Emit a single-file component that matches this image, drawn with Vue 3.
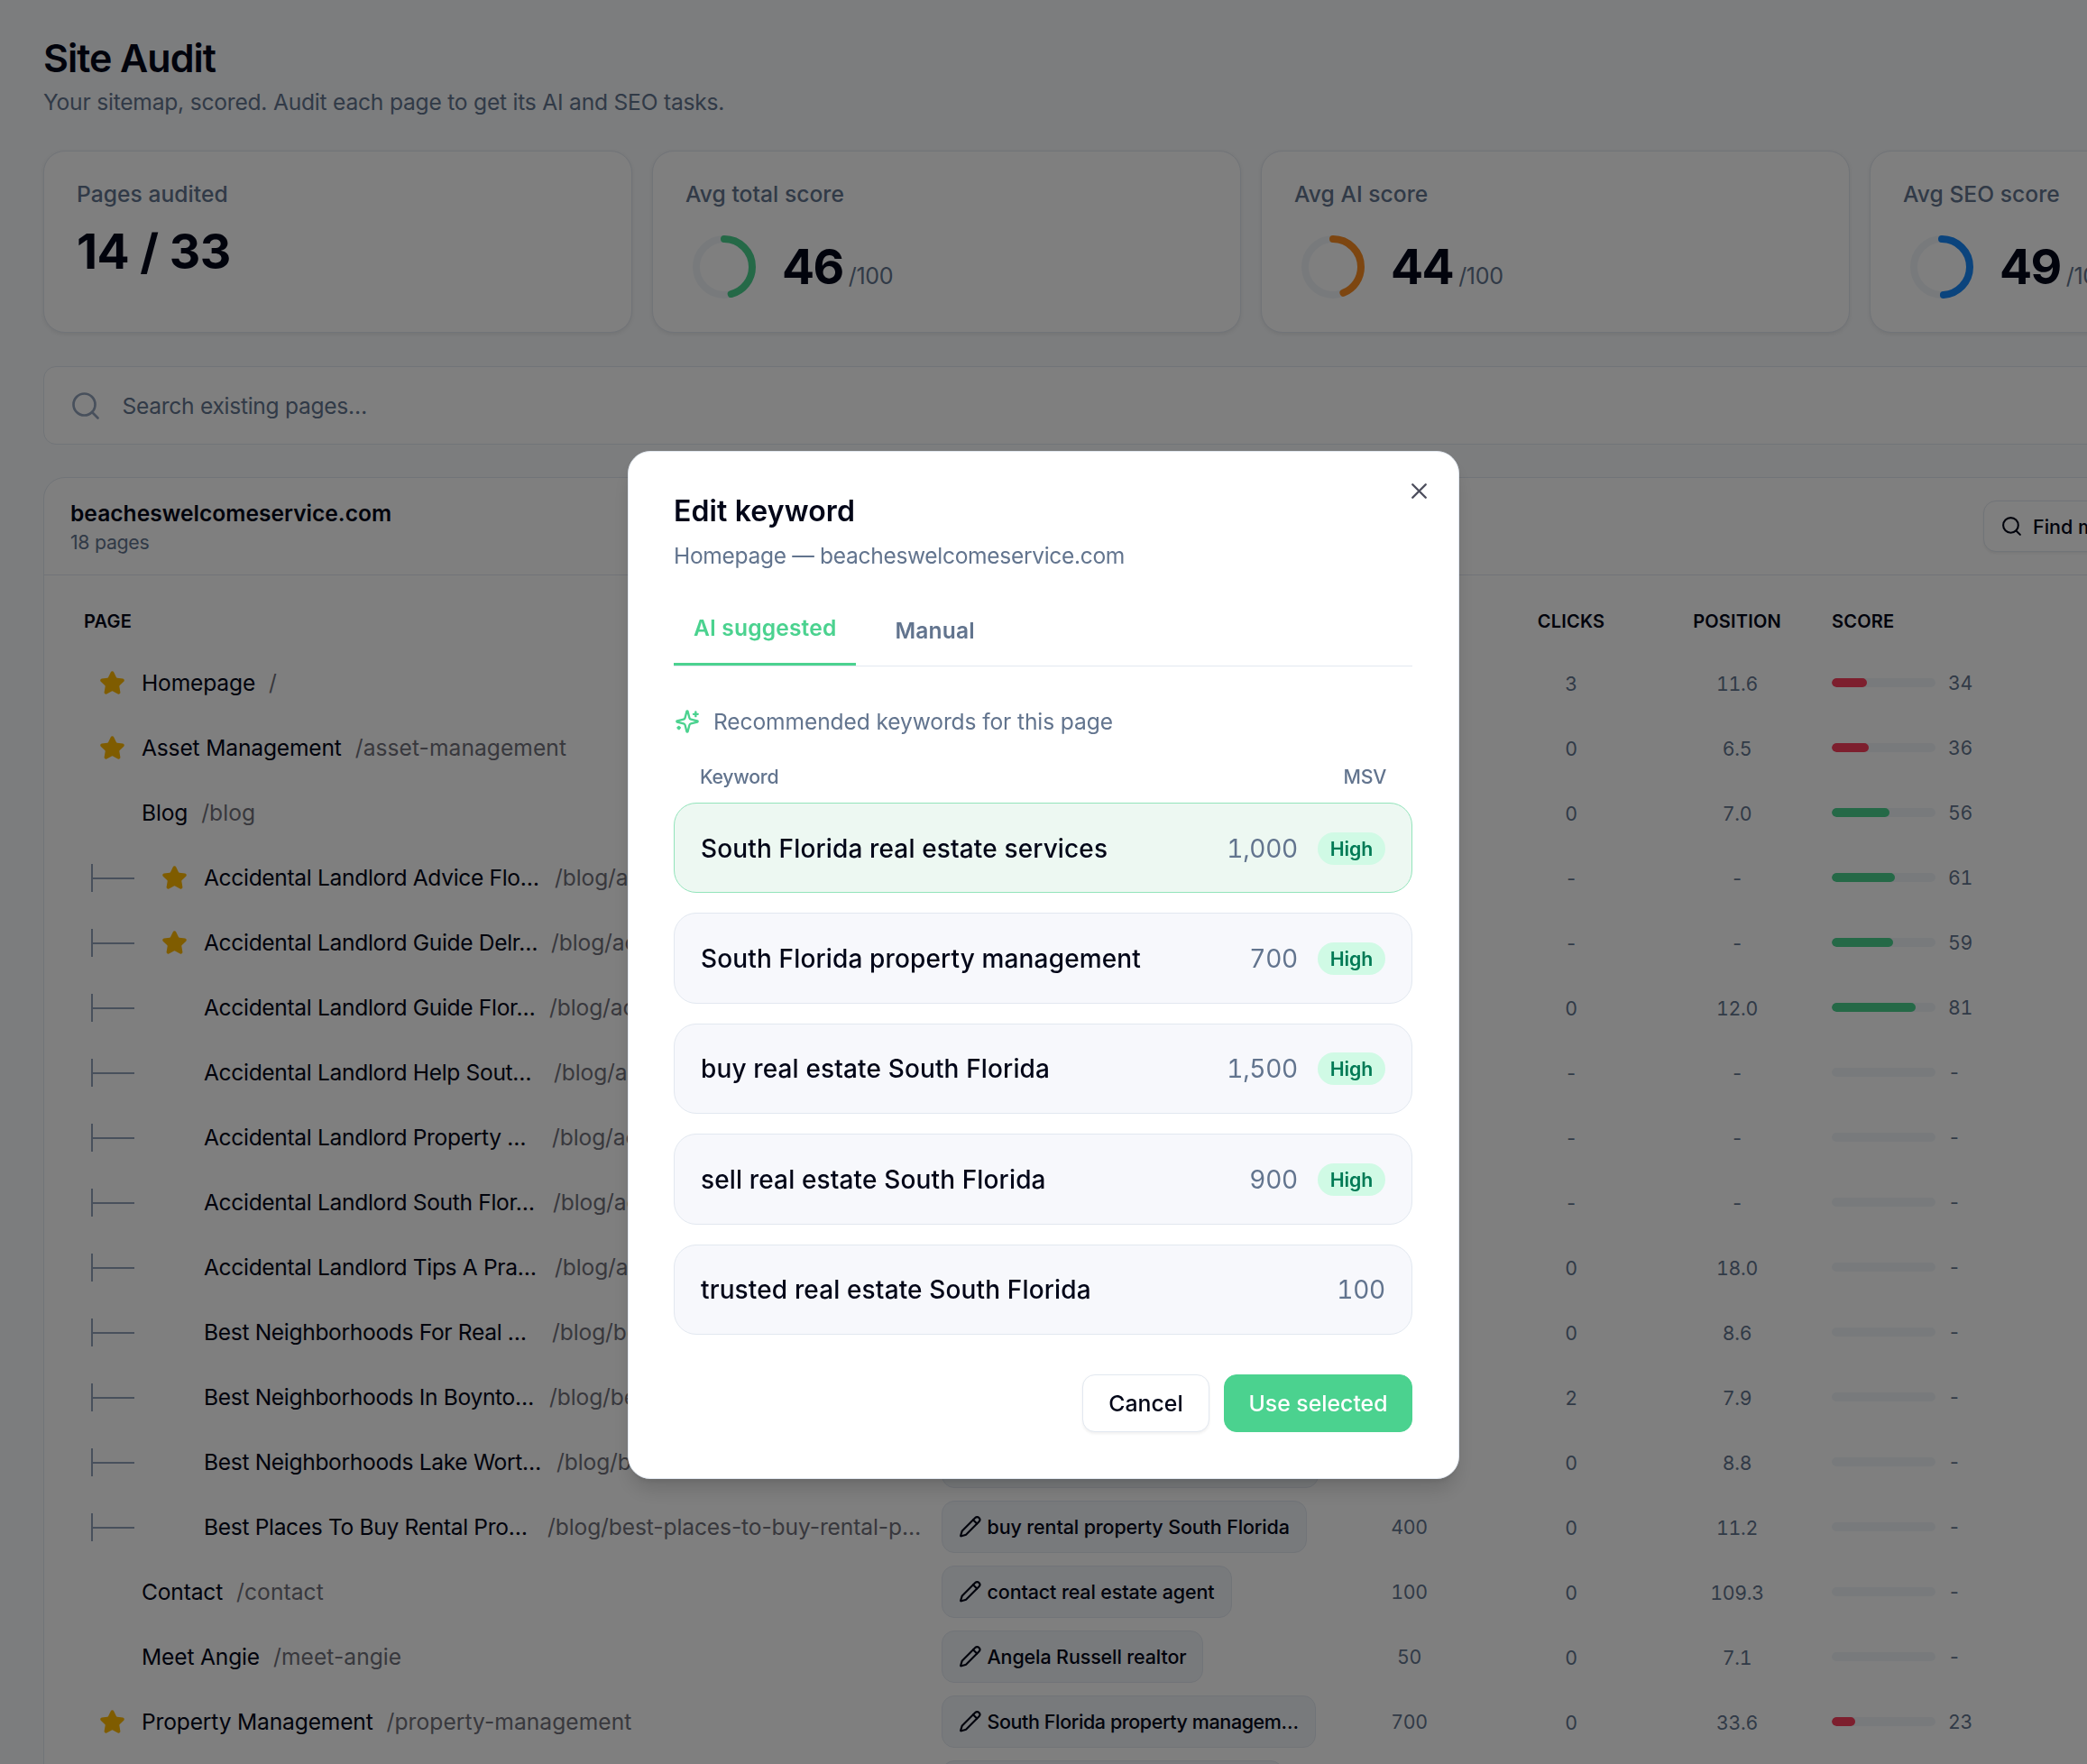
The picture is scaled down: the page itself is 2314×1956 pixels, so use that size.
<template>
  <div class="page">
    <header class="page-header">
      <h1>Site Audit</h1>
      <p>Your sitemap, scored. Audit each page to get its AI and SEO tasks.</p>
    </header>

    <section class="stats">
      <div class="stat-card">
        <div class="stat-label">Pages audited</div>
        <div class="stat-value pages-value">14 / 33</div>
      </div>
      <div v-for="stat in stats" :key="stat.label" class="stat-card">
        <div class="stat-label">{{ stat.label }}</div>
        <div class="stat-score">
          <svg class="ring" viewBox="0 0 86 86">
            <circle class="ring-track" cx="43" cy="43" r="31" />
            <circle
              class="ring-value"
              cx="43"
              cy="43"
              r="31"
              pathLength="100"
              :stroke="stat.color"
              :stroke-dasharray="`${stat.score} 100`"
              transform="rotate(-90 43 43)"
            />
          </svg>
          <div class="stat-figure">
            <span class="stat-value">{{ stat.score }}</span>
            <span class="stat-max">/100</span>
          </div>
        </div>
      </div>
    </section>

    <div class="search">
      <svg class="search-icon" viewBox="0 0 24 24">
        <circle cx="11" cy="11" r="8" />
        <path d="m21 21-4.3-4.3" />
      </svg>
      <span>Search existing pages…</span>
    </div>

    <section class="site">
      <div class="site-header">
        <div class="site-name">
          <h2>beacheswelcomeservice.com</h2>
          <p>18 pages</p>
        </div>
        <button class="find-btn">
          <svg viewBox="0 0 24 24">
            <circle cx="11" cy="11" r="8" />
            <path d="m21 21-4.3-4.3" />
          </svg>
          Find more pages
        </button>
      </div>

      <div class="row head">
        <div class="head-page">Page</div>
        <div></div>
        <div class="num"></div>
        <div class="num">Clicks</div>
        <div class="num">Position</div>
        <div class="score">Score</div>
      </div>

      <div v-for="row in rows" :key="row.path" class="row">
        <div class="page-cell" :class="{ child: row.w }">
          <span v-if="row.w" class="branch"></span>
          <span class="star-slot">
            <svg v-if="row.star" viewBox="0 0 24 24">
              <path d="M11.525 2.295a.53.53 0 0 1 .95 0l2.31 4.679a2.123 2.123 0 0 0 1.595 1.16l5.166.756a.53.53 0 0 1 .294.904l-3.736 3.638a2.123 2.123 0 0 0-.611 1.878l.882 5.14a.53.53 0 0 1-.771.56l-4.618-2.428a2.122 2.122 0 0 0-1.973 0L6.396 21.01a.53.53 0 0 1-.77-.56l.881-5.139a2.122 2.122 0 0 0-.611-1.879L2.16 9.795a.53.53 0 0 1 .294-.906l5.165-.755a2.122 2.122 0 0 0 1.597-1.16z" />
            </svg>
          </span>
          <span class="name" :style="row.w ? { width: row.w + 'px' } : null">{{ row.name }}</span>
          <span class="path">{{ row.path }}</span>
        </div>
        <div class="keyword-cell">
          <span v-if="row.keyword" class="pill" :class="{ truncated: row.keyword.endsWith('…') }">
            <svg viewBox="0 0 24 24">
              <path d="M21.174 6.812a1 1 0 0 0-3.986-3.987L3.842 16.174a2 2 0 0 0-.5.83l-1.321 4.352a.5.5 0 0 0 .623.622l4.353-1.32a2 2 0 0 0 .83-.497z" />
              <path d="m15 5 4 4" />
            </svg>
            {{ row.keyword }}
          </span>
        </div>
        <div class="num msv">{{ row.msv }}</div>
        <div class="num">{{ row.clicks }}</div>
        <div class="num">{{ row.position }}</div>
        <div class="score">
          <span class="bar">
            <span
              v-if="row.score"
              class="bar-fill"
              :class="row.score < 50 ? 'low' : 'good'"
              :style="{ width: row.score + '%' }"
            ></span>
          </span>
          <span>{{ row.score || '-' }}</span>
        </div>
      </div>
    </section>
  </div>

  <div class="overlay">
    <div class="modal">
      <svg class="close" viewBox="0 0 24 24">
        <path d="M18 6 6 18" />
        <path d="m6 6 12 12" />
      </svg>
      <h3>Edit keyword</h3>
      <p class="modal-sub">Homepage — beacheswelcomeservice.com</p>

      <div class="tabs">
        <div class="tab active">AI suggested</div>
        <div class="tab">Manual</div>
      </div>

      <div class="recommend">
        <svg viewBox="0 0 24 24">
          <path d="M9.937 15.5A2 2 0 0 0 8.5 14.063l-6.135-1.582a.5.5 0 0 1 0-.962L8.5 9.936A2 2 0 0 0 9.937 8.5l1.582-6.135a.5.5 0 0 1 .963 0L14.063 8.5A2 2 0 0 0 15.5 9.937l6.135 1.581a.5.5 0 0 1 0 .964L15.5 14.063a2 2 0 0 0-1.437 1.437l-1.582 6.135a.5.5 0 0 1-.963 0z" />
          <path d="M20 3v4" />
          <path d="M22 5h-4" />
          <path d="M4 17v2" />
          <path d="M5 18H3" />
        </svg>
        Recommended keywords for this page
      </div>

      <div class="list-head">
        <span>Keyword</span>
        <span>MSV</span>
      </div>
      <div class="options">
        <div
          v-for="(option, index) in options"
          :key="option.keyword"
          class="option"
          :class="{ selected: index === selected }"
          @click="selected = index"
        >
          <span class="option-name">{{ option.keyword }}</span>
          <span class="option-msv">{{ option.msv }}</span>
          <span v-if="option.high" class="badge">High</span>
        </div>
      </div>

      <div class="actions">
        <button class="btn cancel">Cancel</button>
        <button class="btn primary">Use selected</button>
      </div>
    </div>
  </div>
</template>

<script setup>
import { ref } from 'vue'

const selected = ref(0)

const stats = [
  { label: 'Avg total score', score: 46, color: '#4bd28f' },
  { label: 'Avg AI score', score: 44, color: '#fb8c22' },
  { label: 'Avg SEO score', score: 49, color: '#1688fb' }
]

// w is the width of the name column of nested pages
const rows = [
  { name: 'Homepage', path: '/', star: true, clicks: 3, position: '11.6', score: 34 },
  { name: 'Asset Management', path: '/asset-management', star: true, clicks: 0, position: '6.5', score: 36 },
  { name: 'Blog', path: '/blog', clicks: 0, position: '7.0', score: 56 },
  { name: 'Accidental Landlord Advice Flo…', path: '/blog/accidental-landlord-advice', w: 390, star: true, clicks: '-', position: '-', score: 61 },
  { name: 'Accidental Landlord Guide Delr…', path: '/blog/accidental-landlord-guide-d', w: 386, star: true, clicks: '-', position: '-', score: 59 },
  { name: 'Accidental Landlord Guide Flor…', path: '/blog/accidental-landlord-guide-f', w: 384, clicks: 0, position: '12.0', score: 81 },
  { name: 'Accidental Landlord Help Sout…', path: '/blog/accidental-landlord-help', w: 389, clicks: '-', position: '-' },
  { name: 'Accidental Landlord Property …', path: '/blog/accidental-landlord-prop', w: 387, clicks: '-', position: '-' },
  { name: 'Accidental Landlord South Flor…', path: '/blog/accidental-landlord-south', w: 388, clicks: '-', position: '-' },
  { name: 'Accidental Landlord Tips A Pra…', path: '/blog/accidental-landlord-tips', w: 390, clicks: 0, position: '18.0' },
  { name: 'Best Neighborhoods For Real …', path: '/blog/best-neighborhoods-for', w: 387, clicks: 0, position: '8.6' },
  { name: 'Best Neighborhoods In Boynto…', path: '/blog/best-neighborhoods-in', w: 384, clicks: 2, position: '7.9' },
  { name: 'Best Neighborhoods Lake Wort…', path: '/blog/best-neighborhoods-lake', w: 392, keyword: 'best neighborhoods in Lake Worth', clicks: 0, position: '8.8' },
  { name: 'Best Places To Buy Rental Pro…', path: '/blog/best-places-to-buy-rental-p…', w: 382, keyword: 'buy rental property South Florida', msv: 400, clicks: 0, position: '11.2' },
  { name: 'Contact', path: '/contact', keyword: 'contact real estate agent', msv: 100, clicks: 0, position: '109.3' },
  { name: 'Meet Angie', path: '/meet-angie', keyword: 'Angela Russell realtor', msv: 50, clicks: 0, position: '7.1' },
  { name: 'Property Management', path: '/property-management', star: true, keyword: 'South Florida property managem…', msv: 700, clicks: 0, position: '33.6', score: 23 },
  { name: '', path: '', keyword: 'real estate agent South Florida' }
]

const options = [
  { keyword: 'South Florida real estate services', msv: '1,000', high: true },
  { keyword: 'South Florida property management', msv: '700', high: true },
  { keyword: 'buy real estate South Florida', msv: '1,500', high: true },
  { keyword: 'sell real estate South Florida', msv: '900', high: true },
  { keyword: 'trusted real estate South Florida', msv: '100' }
]
</script>

<style>
body {
  overflow: hidden;
}
</style>

<style scoped>
h1,
h2,
h3,
p {
  margin: 0;
}

button {
  font-family: inherit;
}

svg {
  display: block;
  flex: none;
  fill: none;
  stroke: currentColor;
  stroke-width: 2;
  stroke-linecap: round;
  stroke-linejoin: round;
}

.page,
.overlay {
  box-sizing: border-box;
  height: 1956px;
  font-family: Inter, sans-serif;
  font-size: 24.6px;
  letter-spacing: -0.012em;
  color: #020618;
}

.page {
  overflow: hidden;
  padding: 38.5px 0 0 48px;
  background: #f8fafc;
}

.page-header h1 {
  font-size: 43px;
  font-weight: 600;
  line-height: 50px;
  letter-spacing: -0.024em;
}

.page-header p {
  margin-top: 6px;
  line-height: 36px;
  letter-spacing: -0.009em;
  color: #62748e;
}

.stats {
  display: grid;
  grid-template-columns: repeat(4, 653px);
  gap: 22px;
  margin-top: 36.5px;
}

.stat-card {
  box-sizing: border-box;
  height: 202px;
  padding: 29px 36px;
  border: 1px solid #e2e8f0;
  border-radius: 24px;
  background: #fff;
  box-shadow: 0 1.5px 4px rgba(0, 0, 0, 0.07);
}

.stat-label {
  line-height: 36px;
  font-weight: 500;
  letter-spacing: 0.002em;
  color: #62748e;
}

.stat-value {
  font-size: 53.5px;
  font-weight: 700;
  line-height: 64px;
  letter-spacing: -0.03em;
}

.pages-value {
  margin-top: 14px;
  letter-spacing: -0.01em;
}

.stat-score {
  display: flex;
  align-items: center;
  gap: 21px;
  margin-top: 20px;
}

.ring {
  width: 86px;
  height: 86px;
  stroke-width: 8;
}

.ring-track {
  stroke: #f1f5f9;
}

.stat-figure {
  display: flex;
  align-items: baseline;
  gap: 6px;
}

.stat-max {
  font-size: 25px;
  color: #62748e;
}

.search {
  box-sizing: border-box;
  display: flex;
  align-items: center;
  gap: 22.5px;
  width: 2678px;
  height: 87px;
  margin-top: 37px;
  padding-left: 28px;
  border: 1px solid #e2e8f0;
  border-radius: 14px;
  background: #fff;
  color: #62748e;
}

.search-icon {
  width: 36px;
  height: 36px;
  stroke-width: 1.8;
  color: #90a1b9;
}

.site {
  width: 2676px;
  margin-top: 36px;
  border: 1px solid #e2e8f0;
  border-radius: 24px;
  background: #fff;
}

.site-header {
  display: flex;
  align-items: center;
  height: 107px;
  padding-left: 29px;
  border-bottom: 1px solid #e2e8f0;
}

.site-name {
  flex: 0 0 2121px;
}

.site-name h2 {
  font-size: 24.6px;
  font-weight: 600;
  line-height: 34px;
  letter-spacing: 0;
}

.site-name p {
  font-size: 21.3px;
  line-height: 30px;
  color: #62748e;
}

.find-btn {
  display: flex;
  align-items: center;
  gap: 11px;
  height: 57px;
  padding: 0 18px;
  border: 1px solid #e2e8f0;
  border-radius: 14px;
  background: #fff;
  box-shadow: 0 1.5px 3px rgba(0, 0, 0, 0.06);
  font-size: 21.5px;
  font-weight: 500;
  color: #020618;
}

.find-btn svg {
  width: 25px;
  height: 25px;
}

.row {
  display: grid;
  grid-template-columns: 995px 429px 179px 180px 188px 1fr;
  align-items: center;
  height: 72px;
}

.head {
  height: 30px;
  padding: 36px 0 17px;
  font-size: 20px;
  font-weight: 600;
  letter-spacing: 0.01em;
  text-transform: uppercase;
}

.head-page {
  padding-left: 44px;
}

.page-cell {
  display: flex;
  align-items: center;
  padding-left: 61px;
  white-space: nowrap;
}

.page-cell.child {
  padding-left: 52px;
}

/* tree connector in front of nested pages */
.branch {
  position: relative;
  width: 48px;
  height: 31px;
  margin-right: 30px;
  border-left: 2px solid #90a1b9;
  box-sizing: border-box;
}

.branch::after {
  content: '';
  position: absolute;
  top: 15px;
  left: 0;
  right: 0;
  height: 2px;
  background: #90a1b9;
}

.star-slot {
  width: 29px;
  height: 29px;
  margin-right: 18px;
}

.star-slot svg {
  fill: #ffb900;
  stroke: #ffb900;
}

.name {
  margin-right: 15px;
  letter-spacing: -0.007em;
}

.child .name {
  margin-right: -1px;
  letter-spacing: -0.014em;
}

.path {
  letter-spacing: 0.002em;
  color: #71717b;
}

.child .path {
  letter-spacing: -0.005em;
}

.pill {
  box-sizing: border-box;
  display: inline-flex;
  align-items: center;
  gap: 6px;
  height: 58px;
  padding: 0 18px;
  border: 1px solid #e2e8f0;
  border-radius: 14px;
  background: #f1f5f9;
  font-size: 21.5px;
  font-weight: 500;
  letter-spacing: -0.006em;
  white-space: nowrap;
}

.pill.truncated {
  letter-spacing: -0.019em;
}

.pill svg {
  width: 25.5px;
  height: 25.5px;
}

.num {
  text-align: center;
}

.row:not(.head) .num {
  padding-top: 2px;
  font-size: 21.3px;
  font-variant-numeric: tabular-nums;
  color: #62748e;
}

.row:not(.head) .msv {
  padding: 0;
}

.score {
  display: flex;
  align-items: center;
  gap: 14px;
  padding-left: 11px;
}

.row:not(.head) .score {
  font-size: 21.3px;
  font-variant-numeric: tabular-nums;
  color: #62748e;
}

.bar {
  width: 115px;
  height: 10px;
  border-radius: 5px;
  background: #f1f5f9;
  overflow: hidden;
}

.bar-fill {
  display: block;
  height: 100%;
  border-radius: 5px;
}

.bar-fill.low {
  background: #fb3f5c;
}

.bar-fill.good {
  background: #4bd28f;
}

.overlay {
  position: fixed;
  inset: 0;
  display: flex;
  justify-content: center;
  align-items: flex-start;
  padding-top: 500px;
  background: rgba(0, 0, 0, 0.5);
}

.modal {
  position: relative;
  box-sizing: border-box;
  width: 922px;
  height: 1140px;
  padding: 44px 51px 0 50px;
  border: 1px solid #e2e8f0;
  border-radius: 25px;
  background: #fff;
  box-shadow: 0 15px 22px -4px rgba(0, 0, 0, 0.15), 0 6px 9px -6px rgba(0, 0, 0, 0.15);
}

.close {
  position: absolute;
  top: 29px;
  right: 29px;
  width: 29px;
  height: 29px;
  color: #4e4f5e;
}

.modal h3 {
  font-size: 32px;
  font-weight: 600;
  line-height: 44px;
  letter-spacing: 0.004em;
}

.modal-sub {
  margin-top: 9px;
  line-height: 36px;
  letter-spacing: -0.014em;
  color: #62748e;
}

.tabs {
  display: flex;
  gap: 21.5px;
  height: 82px;
  margin-top: 22px;
  border-bottom: 1px solid #e2e8f0;
  font-weight: 600;
  letter-spacing: 0.006em;
  white-space: nowrap;
}

.tab {
  box-sizing: border-box;
  display: flex;
  align-items: center;
  padding: 3px 22px 0;
  color: #62748e;
}

.tab.active {
  width: 202px;
  padding-top: 0;
  border-bottom: 3px solid #4bd28f;
  color: #4bd28f;
}

.recommend {
  display: flex;
  align-items: center;
  gap: 15px;
  margin: 43px 0 0 1px;
  line-height: 36px;
  letter-spacing: -0.005em;
  color: #62748e;
}

.recommend svg {
  width: 28px;
  height: 28px;
  color: #4bd28f;
}

.list-head {
  display: flex;
  justify-content: space-between;
  margin: 28px 29px 14px;
  font-size: 21.3px;
  font-weight: 500;
  line-height: 30px;
  color: #62748e;
}

.options {
  display: grid;
  gap: 22px;
}

.option {
  box-sizing: border-box;
  display: flex;
  align-items: center;
  height: 100.4px;
  padding: 1px 29px 0;
  border: 1px solid #e2e8f0;
  border-radius: 25px;
  background: #f7f8fc;
  font-size: 28px;
}

.option.selected {
  border-color: #93e4bb;
  background: #edf8f2;
}

.option-name {
  flex: 1;
  font-weight: 500;
  letter-spacing: 0.005em;
}

.option-msv {
  font-size: 28px;
  font-variant-numeric: tabular-nums;
  letter-spacing: -0.01em;
  color: #62748e;
}

.badge {
  width: 75px;
  margin-left: 22px;
  border-radius: 18px;
  background: #d0fae5;
  font-size: 21.3px;
  font-weight: 600;
  line-height: 36px;
  letter-spacing: -0.005em;
  text-align: center;
  color: #007a55;
}

.actions {
  display: flex;
  justify-content: flex-end;
  gap: 16px;
  margin-top: 44px;
}

.btn {
  box-sizing: border-box;
  height: 64px;
  padding: 0;
  border: 1px solid #e2e8f0;
  border-radius: 14px;
  font-size: 24.8px;
  font-weight: 500;
}

.cancel {
  width: 141px;
  background: #fff;
  box-shadow: 0 1.5px 3px rgba(0, 0, 0, 0.06);
  color: #020618;
}

.primary {
  width: 209px;
  border-color: #4bd28f;
  background: #4bd28f;
  color: #fff;
}
</style>
